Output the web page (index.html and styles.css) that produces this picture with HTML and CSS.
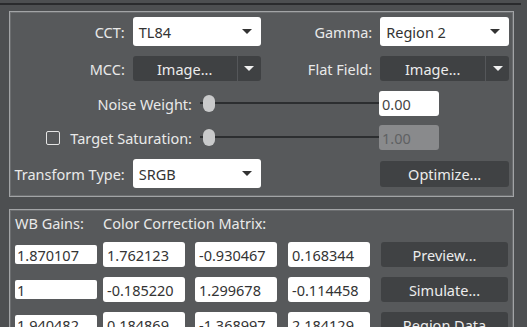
FILE: index.html
```html
<!DOCTYPE html>
<html lang="en">
<head>
    <meta charset="UTF-8">
    <meta name="viewport" content="width=device-width, initial-scale=1.0">
    <title>Color Calibration</title>
    <link rel="stylesheet" href="styles.css">
</head>
<body>
    <div class="frame">
        <div class="panel settings">
            <div class="row">
                <span class="label w1">CCT:</span>
                <div class="select w2"><span>TL84</span><i class="arrow"></i></div>
                <span class="label w3">Gamma:</span>
                <div class="select w4"><span>Region 2</span><i class="arrow"></i></div>
            </div>
            <div class="row mid">
                <span class="label w1">MCC:</span>
                <div class="split w2"><span class="main">Image...</span><span class="drop"><i class="arrow light"></i></span></div>
                <span class="label w3">Flat Field:</span>
                <div class="split w4"><span class="main">Image...</span><span class="drop"><i class="arrow light"></i></span></div>
            </div>
            <div class="row thin">
                <span class="label wl">Noise Weight:</span>
                <div class="slider"><span class="thumb"></span></div>
                <div class="num">0.00</div>
            </div>
            <div class="row thin">
                <span class="label wl"><span class="check"></span>Target Saturation:</span>
                <div class="slider"><span class="thumb"></span></div>
                <div class="num off">1.00</div>
            </div>
            <div class="row">
                <span class="label w1">Transform Type:</span>
                <div class="select w2"><span>SRGB</span><i class="arrow"></i></div>
                <span class="w3"></span>
                <button class="btn w4">Optimize...</button>
            </div>
        </div>

        <div class="panel gains">
            <div class="grid">
                <span class="head">WB Gains:</span>
                <span class="head span3">Color Correction Matrix:</span>
                <span></span>

                <div class="field wb">1.870107</div>
                <div class="field">1.762123</div>
                <div class="field">-0.930467</div>
                <div class="field">0.168344</div>
                <button class="btn">Preview...</button>

                <div class="field wb">1</div>
                <div class="field">-0.185220</div>
                <div class="field">1.299678</div>
                <div class="field">-0.114458</div>
                <button class="btn">Simulate...</button>

                <div class="field wb">1.940482</div>
                <div class="field">0.184869</div>
                <div class="field">-1.368997</div>
                <div class="field">2.184129</div>
                <button class="btn">Region Data</button>
            </div>
        </div>
    </div>
</body>
</html>
```

FILE: styles.css
```css
*{
    margin: 0;
    padding: 0;
    box-sizing: border-box;
    font-family: 'Noto Sans', 'Open Sans', sans-serif;
}
body{
    background-color: #4d4f51;
    width: 527px;
    height: 327px;
    overflow: hidden;
}
.frame{
    margin-top: 3px;
    border-top: 2px solid #2a2b2d;
    width: 521px;
    padding: 6px 0 0 9px;
    display: flex;
    flex-direction: column;
    gap: 12px;
}
.panel{
    width: 505px;
    background-color: #57595b;
    border: 1px solid #a2a4a6;
    box-shadow: inset 0 0 0 1px #6c6e70;
}
.settings{
    height: 186px;
    padding: 5px 4px 0 2px;
    display: flex;
    flex-direction: column;
    gap: 9px;
}
.row{
    display: flex;
    align-items: center;
    height: 29px;
}
.row.mid{
    height: 27px;
}
.row.thin{
    height: 25px;
}
.label{
    color: #e9e9e9;
    font-size: 14.5px;
    text-align: right;
    padding-right: 8px;
    display: flex;
    align-items: center;
    justify-content: flex-end;
    white-space: nowrap;
}
.w1{ width: 121px; }
.w2{ width: 128px; }
.w3{ width: 120px; }
.w4{ width: 129px; }
.wl{ width: 188px; }

.select{
    height: 29px;
    background-color: #fff;
    border-radius: 3px;
    display: flex;
    align-items: center;
    justify-content: space-between;
    padding: 0 9px 0 6px;
    color: #333;
    font-size: 14.5px;
}
.arrow{
    width: 0;
    height: 0;
    border-left: 5px solid transparent;
    border-right: 5px solid transparent;
    border-top: 5px solid #333;
}
.arrow.light{
    border-top-color: #f0f0f0;
}
.split{
    height: 25px;
    background-color: #3f4143;
    border-radius: 3px;
    display: flex;
    color: #ececec;
    font-size: 14.5px;
}
.split .main{
    flex: 1;
    display: flex;
    align-items: center;
    justify-content: center;
    border-right: 1px solid #55575a;
}
.split .drop{
    width: 23px;
    display: flex;
    align-items: center;
    justify-content: center;
}
.slider{
    width: 179px;
    height: 25px;
    position: relative;
}
.slider::before{
    content: "";
    position: absolute;
    left: 0;
    right: 0;
    top: 11px;
    height: 2px;
    background-color: #2c2e30;
}
.thumb{
    position: absolute;
    left: 3px;
    top: 4px;
    width: 12px;
    height: 17px;
    border-radius: 6px;
    background-color: #c9cacb;
}
.num{
    width: 60px;
    height: 25px;
    background-color: #fff;
    border-radius: 3px;
    color: #444;
    font-size: 14.5px;
    padding-left: 3px;
    display: flex;
    align-items: center;
}
.num.off{
    background-color: #898a8c;
    color: #5f6163;
}
.check{
    width: 14px;
    height: 14px;
    border: 1px solid #e4e4e4;
    border-radius: 2px;
    margin-right: 10px;
}
.btn{
    height: 26px;
    border: none;
    border-radius: 3px;
    background-color: #404244;
    color: #ececec;
    font-size: 14.5px;
}

.gains{
    height: 130px;
    padding: 4px 0 0 5px;
}
.grid{
    display: grid;
    grid-template-columns: 88px 92px 93px 93px 127px;
    grid-template-rows: 18px 25px 25px 25px;
    row-gap: 10px;
    align-items: center;
}
.grid .head{
    color: #e9e9e9;
    font-size: 14.5px;
    white-space: nowrap;
}
.span3{
    grid-column: span 3;
}
.field{
    width: 82px;
    height: 25px;
    background-color: #fff;
    border-radius: 3px;
    color: #333;
    font-size: 14.5px;
    padding-left: 4px;
    display: flex;
    align-items: center;
}
.field.wb{
    height: 19px;
    border-radius: 2px;
    padding-left: 2px;
}
.grid .btn{
    height: 25px;
}
```
